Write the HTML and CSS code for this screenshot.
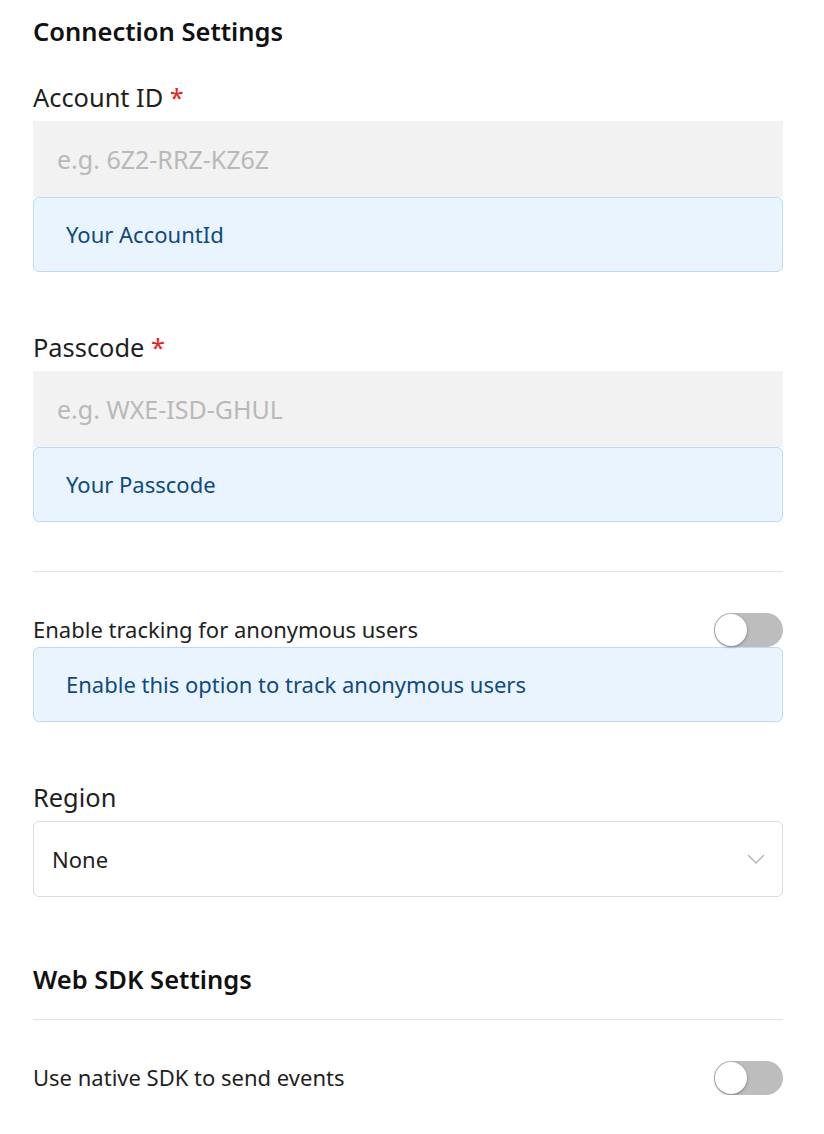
FILE: index.html
```html
<!DOCTYPE html>
<html lang="en">
<head>
<meta charset="utf-8">
<title>Connection Settings</title>
<link rel="stylesheet" href="styles.css">
</head>
<body>
<main class="page">
  <h2 class="section-title">Connection Settings</h2>

  <div class="field first">
    <label class="label">Account ID <span class="req">*</span></label>
    <div class="input"><span class="placeholder">e.g. 6Z2-RRZ-KZ6Z</span></div>
    <div class="help">Your AccountId</div>
  </div>

  <div class="field">
    <label class="label">Passcode <span class="req">*</span></label>
    <div class="input"><span class="placeholder">e.g. WXE-ISD-GHUL</span></div>
    <div class="help">Your Passcode</div>
  </div>

  <hr class="divider divider-a">

  <div class="toggle-field">
    <div class="toggle-row">
      <span class="toggle-label">Enable tracking for anonymous users</span>
      <span class="switch"><span class="knob"></span></span>
    </div>
    <div class="help">Enable this option to track anonymous users</div>
  </div>

  <div class="field">
    <label class="label">Region</label>
    <div class="select">
      <span class="select-value">None</span>
      <svg class="chevron" width="18" height="12" viewBox="0 0 18 12"><path d="M1 2 L9 10 L17 2" fill="none" stroke="#b5b5b5" stroke-width="1.4"/></svg>
    </div>
  </div>

  <h2 class="section-title second">Web SDK Settings</h2>
  <hr class="divider divider-b">

  <div class="toggle-field last">
    <div class="toggle-row">
      <span class="toggle-label">Use native SDK to send events</span>
      <span class="switch"><span class="knob"></span></span>
    </div>
  </div>
</main>
</body>
</html>
```

FILE: styles.css
```css
* { box-sizing: border-box; }
html, body { margin: 0; padding: 0; background: #ffffff; }
body {
  font-family: "Noto Sans", "Open Sans", sans-serif;
  color: #1a1a1a;
}
.page {
  width: 824px;
  padding: 15px 41px 0 33px;
}
.section-title {
  margin: 0;
  font-size: 25.5px;
  line-height: 32px;
  font-weight: 600;
  color: #111;
}
.section-title.second { margin-top: 66px; }
.field { margin-top: 57px; }
.field.first { margin-top: 32px; }
.label {
  display: block;
  font-size: 25.4px;
  line-height: 36px;
  margin-bottom: 6px;
  padding-bottom: 2px;
  height: 36px;
  color: #1f1f1f;
}
.req { color: #e8201a; }
.input {
  height: 76px;
  background: #f2f2f2;
  display: flex;
  align-items: center;
  padding-left: 24px;
}
.placeholder {
  font-size: 25px;
  color: #b9b9b9;
}
.help {
  height: 75px;
  background: #eaf4fe;
  border: 1px solid #bddbf3;
  border-radius: 6px;
  display: flex;
  align-items: center;
  padding-left: 32px;
  padding-bottom: 2px;
  font-size: 22px;
  color: #0d4a83;
}
.divider {
  border: 0;
  height: 1px;
  background: #e3e3e3;
  margin: 0;
}
.divider-a { margin-top: 49px; }
.divider-b { margin-top: 24px; }
.toggle-field { margin-top: 41px; }
.toggle-row {
  height: 34px;
  display: flex;
  align-items: center;
  justify-content: space-between;
}
.toggle-label {
  font-size: 22px;
  color: #1f1f1f;
  padding-bottom: 3px;
}
.switch {
  position: relative;
  width: 69px;
  height: 34px;
  border-radius: 17px;
  background: #bdbdbd;
}
.knob {
  position: absolute;
  left: 1px;
  top: 1px;
  width: 32px;
  height: 32px;
  border-radius: 50%;
  background: #fff;
  box-shadow: 0 1px 3px rgba(0,0,0,0.35);
}
.select {
  height: 76px;
  border: 1px solid #dcdcdc;
  border-radius: 6px;
  display: flex;
  align-items: center;
  justify-content: space-between;
  padding: 0 17px 0 18px;
}
.select-value {
  font-size: 22px;
  color: #1f1f1f;
}
.chevron { display: block; }
```
